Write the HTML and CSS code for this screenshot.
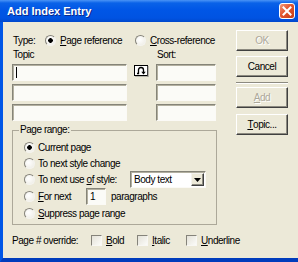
FILE: index.html
```html
<!DOCTYPE html>
<html lang="en">

<head>
    <meta charset="utf-8">
    <title>Add Index Entry</title>
    <link rel="stylesheet" href="styles.css">
</head>

<body>
    <div class="window">
        <div class="titlebar">
            <span class="title">Add Index Entry</span>
            <span class="close">
                <svg width="10" height="10" viewBox="0 0 10 10">
                    <path d="M1.5 1.5 L8.5 8.5 M8.5 1.5 L1.5 8.5" stroke="#fff" stroke-width="2" stroke-linecap="square" />
                </svg>
            </span>
        </div>

        <div class="frame">
            <div class="main">
                <div class="type_row">
                    <span class="type_label">Type:</span>
                    <span class="opt page_opt"><span class="radio on"></span><span><u>P</u>age reference</span></span>
                    <span class="opt"><span class="radio"></span><span><u>C</u>ross-reference</span></span>
                </div>

                <div class="fields">
                    <span class="lbl">Topic</span>
                    <span></span>
                    <span class="lbl sort_lbl">Sort:</span>

                    <div class="field"><span class="caret"></span></div>
                    <span class="swap">
                        <svg width="15" height="12" viewBox="0 0 15 12">
                            <rect x="0.5" y="0.5" width="13" height="10" fill="#fff" stroke="#000" />
                            <path d="M14 1 V12 H1" fill="none" stroke="#808080" />
                            <path d="M3 8.5 H4.5 V5 Q4.5 2.5 7 2.5 Q9.5 2.5 9.5 5 V8.5" fill="none" stroke="#000" stroke-width="1.3" />
                            <path d="M7.3 6.8 L9.5 9.6 L11.7 6.8 Z" fill="#000" />
                        </svg>
                    </span>
                    <div class="field"></div>

                    <div class="field"></div>
                    <span></span>
                    <div class="field"></div>

                    <div class="field"></div>
                    <span></span>
                    <div class="field"></div>
                </div>

                <fieldset class="range">
                    <legend>Page range:</legend>
                    <div class="range_rows">
                        <div class="opt"><span class="radio on"></span><span>Current page</span></div>
                        <div class="opt"><span class="radio"></span><span>To next style change</span></div>
                        <div class="opt">
                            <span class="radio"></span><span>To next use <u>o</u>f style:</span>
                            <div class="select">
                                <span class="select_text">Body text</span>
                                <span class="drop">
                                    <svg width="7" height="4" viewBox="0 0 7 4"><path d="M0 0 H7 L3.5 4 Z" fill="#000" /></svg>
                                </span>
                            </div>
                        </div>
                        <div class="opt">
                            <span class="radio"></span><span class="for_next"><u>F</u>or next</span>
                            <div class="field small">1</div>
                            <span class="para">paragraphs</span>
                        </div>
                        <div class="opt"><span class="radio"></span><span><u>S</u>uppress page range</span></div>
                    </div>
                </fieldset>

                <div class="override">
                    <span class="override_label">Page # override:</span>
                    <span class="check_item bold_item"><span class="check"></span><span><u>B</u>old</span></span>
                    <span class="check_item italic_item"><span class="check"></span><span><u>I</u>talic</span></span>
                    <span class="check_item"><span class="check"></span><span><u>U</u>nderline</span></span>
                </div>
            </div>

            <div class="buttons">
                <button class="btn disabled">OK</button>
                <button class="btn cancel">Cancel</button>
                <div class="sep"></div>
                <button class="btn disabled add"><u>A</u>dd</button>
                <button class="btn topic"><u>T</u>opic...</button>
            </div>
        </div>
    </div>
</body>

</html>
```

FILE: styles.css
```css
* {
    margin: 0;
    padding: 0;
    box-sizing: border-box;
}

body {
    width: 298px;
    height: 262px;
    overflow: hidden;
    background: #ece9d8;
    font: 10px "Liberation Sans", Arial, sans-serif;
    letter-spacing: -0.45px;
    color: #000;
}

u {
    text-decoration: underline;
    text-underline-offset: 1px;
}

.window {
    width: 298px;
    height: 262px;
    display: flex;
    flex-direction: column;
}

/* title bar */
.titlebar {
    height: 22px;
    flex: none;
    display: flex;
    align-items: center;
    padding-left: 7px;
    background: linear-gradient(#4a94f6, #0a62e8 3px, #0056e6 10px, #0053e2 18px, #0048cc);
}

.titlebar .title {
    color: #fff;
    font-weight: bold;
    font-size: 11px;
    letter-spacing: 0;
    text-shadow: 1px 1px #0b2a8c;
}

.titlebar .close {
    margin-left: auto;
    margin-right: 3px;
    width: 16px;
    height: 16px;
    border: 1px solid #fff;
    border-radius: 3px;
    background: linear-gradient(135deg, #f29a7c, #e2552f 45%, #c53d17);
    display: flex;
    align-items: center;
    justify-content: center;
}

/* client area */
.frame {
    flex: 1;
    display: flex;
    gap: 19px;
    padding: 8px 0 0 9px;
    border-left: 3px solid #0056e6;
    border-bottom: 4px solid #003cbc;
}

.main {
    width: 205px;
    flex: none;
}

.opt {
    display: flex;
    align-items: center;
    gap: 3px;
    white-space: nowrap;
}

.radio {
    flex: none;
    width: 11px;
    height: 11px;
    border-radius: 50%;
    border: 1px solid;
    border-color: #85837a #f4f3ee #f4f3ee #85837a;
    background: radial-gradient(circle at 40% 40%, #fff, #eceae2);
}

.radio.on {
    background: radial-gradient(circle, #000 0 2px, transparent 2.6px), radial-gradient(circle at 40% 40%, #fff, #eceae2);
}

.type_row {
    height: 14px;
    margin-top: 3px;
    display: flex;
    align-items: center;
}

.type_row .type_label {
    flex: none;
    width: 33px;
    padding-left: 1px;
}

.type_row .page_opt {
    flex: none;
    width: 90px;
}

.type_row .opt {
    gap: 4px;
}

/* topic / sort fields */
.fields {
    margin-top: 2px;
    display: grid;
    grid-template-columns: 115px 29px 60px;
    grid-template-rows: 12px 17px 17px 17px;
    row-gap: 3px;
}

.fields .lbl {
    line-height: 12px;
    padding-left: 1px;
}

.field {
    height: 17px;
    display: flex;
    align-items: center;
    background: #fbfbf7;
    border: 1px solid;
    border-color: #858478 #fbfaf6 #fbfaf6 #858478;
    box-shadow: inset 1px 1px #b3b0a0;
}

.caret {
    width: 1px;
    height: 11px;
    margin-left: 3px;
    background: #000;
}

.swap {
    justify-self: center;
    align-self: start;
    margin-top: 1px;
    display: flex;
}

/* page range group */
.range {
    margin-top: 3px;
    border: 1px solid #aca899;
    padding: 3px 10px 3px 11px;
}

.range legend {
    margin-left: -5px;
    padding: 0 1px;
    line-height: 12px;
}

.range_rows {
    display: grid;
    grid-template-rows: 16px 16px 17px 17px 16px;
}

.select {
    flex: none;
    width: 76px;
    height: 17px;
    margin-left: auto;
    display: flex;
    align-items: center;
    background: #fff;
    border: 1px solid;
    border-color: #858478 #fbfaf6 #fbfaf6 #858478;
    box-shadow: inset 1px 1px #b3b0a0;
}

.select_text {
    flex: 1;
    padding-left: 3px;
}

.drop {
    width: 13px;
    height: 13px;
    margin-right: 1px;
    display: flex;
    align-items: center;
    justify-content: center;
    background: #ece9d8;
    border: 1px solid;
    border-color: #f4f3ee #404040 #404040 #f4f3ee;
    box-shadow: inset -1px -1px #8c8a80;
}

.for_next {
    flex: none;
    width: 45px;
}

.field.small {
    flex: none;
    width: 20px;
    padding-left: 3px;
}

.para {
    margin-left: 2px;
}

/* page number override */
.override {
    height: 14px;
    margin-top: 8px;
    display: flex;
    align-items: center;
    white-space: nowrap;
}

.override_label {
    flex: none;
    width: 79px;
}

.check_item {
    flex: none;
    display: flex;
    align-items: center;
    gap: 4px;
}

.bold_item {
    width: 46px;
}

.italic_item {
    width: 49px;
}

.check {
    flex: none;
    width: 11px;
    height: 11px;
    border: 1px solid;
    border-color: #85837a #f8f7f3 #f8f7f3 #85837a;
    background: linear-gradient(135deg, #e4e2d8, #fbfbf8);
}

/* command buttons */
.buttons {
    width: 52px;
    flex: none;
    display: flex;
    flex-direction: column;
}

.btn {
    height: 21px;
    width: 52px;
    font: inherit;
    letter-spacing: inherit;
    color: #000;
    background: #ece9d8;
    border: 1px solid;
    border-color: #fff #404040 #404040 #fff;
    box-shadow: inset -1px -1px #8c8a80;
    display: flex;
    align-items: center;
    justify-content: center;
}

.btn.disabled {
    color: #aca899;
    text-shadow: 1px 1px #fff;
}

.btn.cancel {
    margin-top: 5px;
}

.sep {
    height: 2px;
    margin-top: 5px;
    border-top: 1px solid #8c8a80;
    border-bottom: 1px solid #fff;
}

.btn.add {
    margin-top: 3px;
}

.btn.topic {
    margin-top: 6px;
}
```
